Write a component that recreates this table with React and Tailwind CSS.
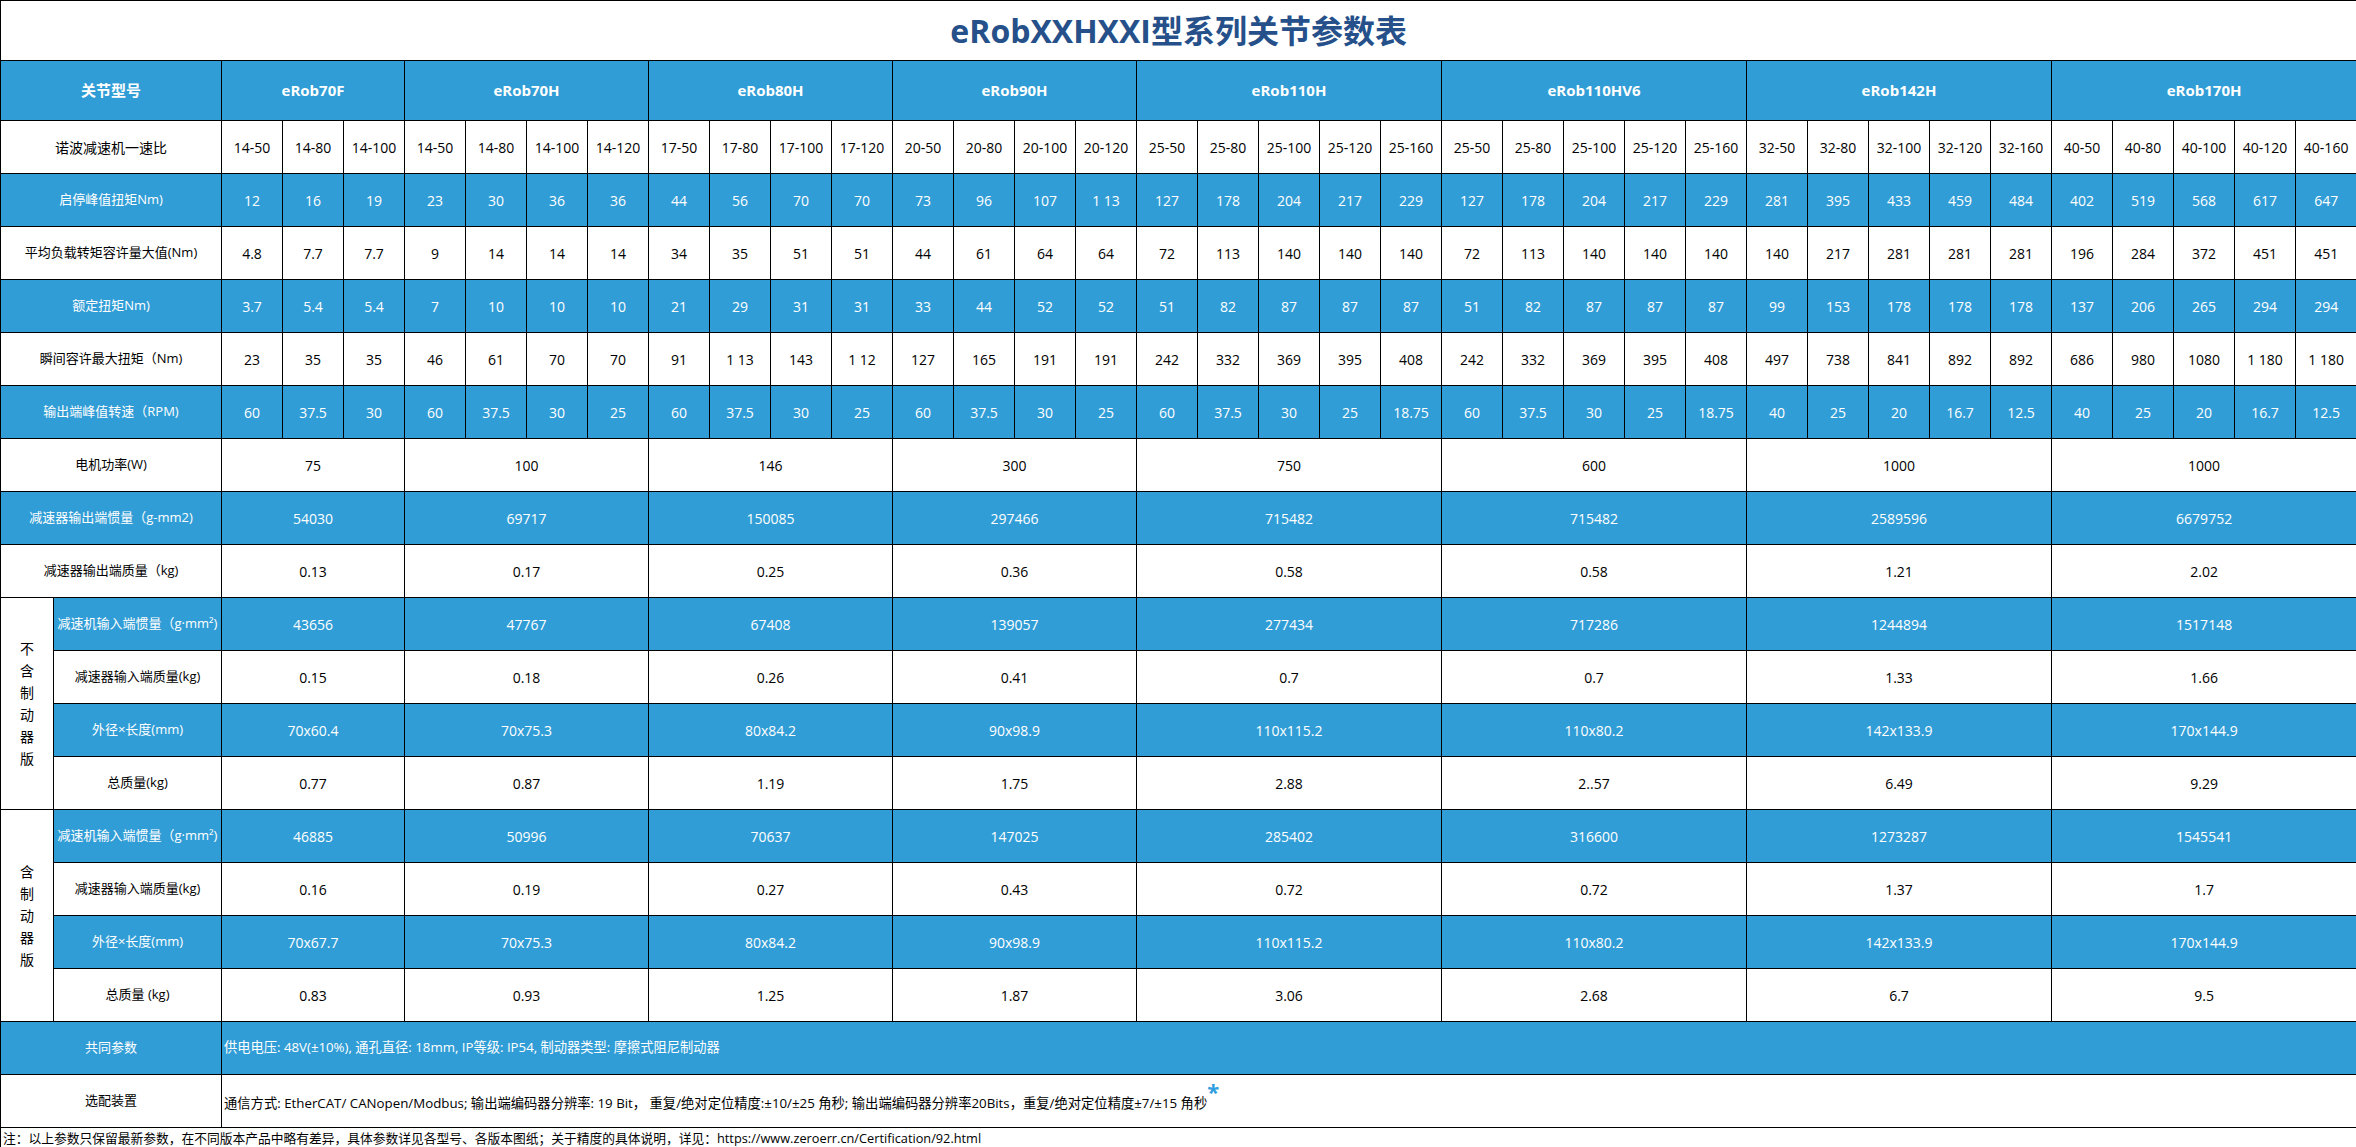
import React from 'react';

const groups = [
  { name: 'eRob70F', n: 3 },
  { name: 'eRob70H', n: 4 },
  { name: 'eRob80H', n: 4 },
  { name: 'eRob90H', n: 4 },
  { name: 'eRob110H', n: 5 },
  { name: 'eRob110HV6', n: 5 },
  { name: 'eRob142H', n: 5 },
  { name: 'eRob170H', n: 5 },
];

// rows with one value per reducer ratio
const ratioRows = [
  {
    label: '诺波减速机一速比',
    size: 'text-[14px]',
    blue: false,
    values: [
      '14-50', '14-80', '14-100',
      '14-50', '14-80', '14-100', '14-120',
      '17-50', '17-80', '17-100', '17-120',
      '20-50', '20-80', '20-100', '20-120',
      '25-50', '25-80', '25-100', '25-120', '25-160',
      '25-50', '25-80', '25-100', '25-120', '25-160',
      '32-50', '32-80', '32-100', '32-120', '32-160',
      '40-50', '40-80', '40-100', '40-120', '40-160',
    ],
  },
  {
    label: '启停峰值扭矩Nm)',
    size: 'text-[13px]',
    blue: true,
    values: [
      '12', '16', '19',
      '23', '30', '36', '36',
      '44', '56', '70', '70',
      '73', '96', '107', '1 13',
      '127', '178', '204', '217', '229',
      '127', '178', '204', '217', '229',
      '281', '395', '433', '459', '484',
      '402', '519', '568', '617', '647',
    ],
  },
  {
    label: '平均负载转矩容许量大值(Nm)',
    size: 'text-[13px]',
    blue: false,
    values: [
      '4.8', '7.7', '7.7',
      '9', '14', '14', '14',
      '34', '35', '51', '51',
      '44', '61', '64', '64',
      '72', '113', '140', '140', '140',
      '72', '113', '140', '140', '140',
      '140', '217', '281', '281', '281',
      '196', '284', '372', '451', '451',
    ],
  },
  {
    label: '额定扭矩Nm)',
    size: 'text-[13px]',
    blue: true,
    values: [
      '3.7', '5.4', '5.4',
      '7', '10', '10', '10',
      '21', '29', '31', '31',
      '33', '44', '52', '52',
      '51', '82', '87', '87', '87',
      '51', '82', '87', '87', '87',
      '99', '153', '178', '178', '178',
      '137', '206', '265', '294', '294',
    ],
  },
  {
    label: '瞬间容许最大扭矩（Nm)',
    size: 'text-[13px]',
    blue: false,
    values: [
      '23', '35', '35',
      '46', '61', '70', '70',
      '91', '1 13', '143', '1 12',
      '127', '165', '191', '191',
      '242', '332', '369', '395', '408',
      '242', '332', '369', '395', '408',
      '497', '738', '841', '892', '892',
      '686', '980', '1080', '1 180', '1 180',
    ],
  },
  {
    label: '输出端峰值转速（RPM)',
    size: 'text-[13px]',
    blue: true,
    values: [
      '60', '37.5', '30',
      '60', '37.5', '30', '25',
      '60', '37.5', '30', '25',
      '60', '37.5', '30', '25',
      '60', '37.5', '30', '25', '18.75',
      '60', '37.5', '30', '25', '18.75',
      '40', '25', '20', '16.7', '12.5',
      '40', '25', '20', '16.7', '12.5',
    ],
  },
];

// rows with one value per model
const modelRows = [
  { label: '电机功率(W)', blue: false, values: ['75', '100', '146', '300', '750', '600', '1000', '1000'] },
  { label: '减速器输出端惯量（g-mm2)', blue: true, values: ['54030', '69717', '150085', '297466', '715482', '715482', '2589596', '6679752'] },
  { label: '减速器输出端质量（kg)', blue: false, values: ['0.13', '0.17', '0.25', '0.36', '0.58', '0.58', '1.21', '2.02'] },
];

const brakeGroups = [
  {
    title: '不含制动器版',
    rows: [
      { label: '减速机输入端惯量（g·mm²)', blue: true, values: ['43656', '47767', '67408', '139057', '277434', '717286', '1244894', '1517148'] },
      { label: '减速器输入端质量(kg)', blue: false, values: ['0.15', '0.18', '0.26', '0.41', '0.7', '0.7', '1.33', '1.66'] },
      { label: '外径×长度(mm)', blue: true, values: ['70x60.4', '70x75.3', '80x84.2', '90x98.9', '110x115.2', '110x80.2', '142x133.9', '170x144.9'] },
      { label: '总质量(kg)', blue: false, values: ['0.77', '0.87', '1.19', '1.75', '2.88', '2..57', '6.49', '9.29'] },
    ],
  },
  {
    title: '含制动器版',
    rows: [
      { label: '减速机输入端惯量（g·mm²)', blue: true, values: ['46885', '50996', '70637', '147025', '285402', '316600', '1273287', '1545541'] },
      { label: '减速器输入端质量(kg)', blue: false, values: ['0.16', '0.19', '0.27', '0.43', '0.72', '0.72', '1.37', '1.7'] },
      { label: '外径×长度(mm)', blue: true, values: ['70x67.7', '70x75.3', '80x84.2', '90x98.9', '110x115.2', '110x80.2', '142x133.9', '170x144.9'] },
      { label: '总质量 (kg)', blue: false, values: ['0.83', '0.93', '1.25', '1.87', '3.06', '2.68', '6.7', '9.5'] },
    ],
  },
];

const cell = 'border border-black p-0 text-center whitespace-nowrap';
const tone = (blue) => (blue ? 'bg-[#319dd6] text-white' : 'bg-white text-black');

const App = () => {
  return (
    <div className="w-[2356px] h-[1147px] overflow-hidden bg-white font-['Open_Sans','Noto_Sans_CJK_SC',sans-serif]">
      <table className="w-[2356px] table-fixed border-collapse">
        <colgroup>
          <col className="w-[53px]" />
          <col className="w-[168px]" />
          {Array.from({ length: 35 }).map((_, i) => (
            <col key={i} className="w-[61px]" />
          ))}
        </colgroup>
        <tbody>
          <tr className="h-[60px]">
            <td colSpan={37} className={`${cell} text-[32px] font-bold text-[#25508a]`}>
              eRobXXHXXI型系列关节参数表
            </td>
          </tr>

          <tr className="h-[60px] bg-[#319dd6] text-white">
            <td colSpan={2} className={`${cell} text-[15px] font-bold`}>关节型号</td>
            {groups.map((g) => (
              <td key={g.name} colSpan={g.n} className={`${cell} text-[15px] font-bold`}>
                {g.name}
              </td>
            ))}
          </tr>

          {ratioRows.map((row) => (
            <tr key={row.label} className={`h-[53px] ${tone(row.blue)}`}>
              <td colSpan={2} className={`${cell} ${row.size}`}>{row.label}</td>
              {row.values.map((v, i) => (
                <td key={i} className={`${cell} text-[14px]`}>{v}</td>
              ))}
            </tr>
          ))}

          {modelRows.map((row) => (
            <tr key={row.label} className={`h-[53px] ${tone(row.blue)}`}>
              <td colSpan={2} className={`${cell} text-[13px]`}>{row.label}</td>
              {row.values.map((v, i) => (
                <td key={i} colSpan={groups[i].n} className={`${cell} text-[14px]`}>{v}</td>
              ))}
            </tr>
          ))}

          {brakeGroups.map((grp) =>
            grp.rows.map((row, r) => (
              <tr key={grp.title + row.label} className={`h-[53px] ${tone(row.blue)}`}>
                {r === 0 && (
                  <td rowSpan={grp.rows.length} className={`${cell} bg-white text-black text-[14px]`}>
                    <div className="flex flex-col items-center leading-[22px]">
                      {grp.title.split('').map((ch, k) => (
                        <span key={k}>{ch}</span>
                      ))}
                    </div>
                  </td>
                )}
                <td className={`${cell} text-[13px]`}>{row.label}</td>
                {row.values.map((v, i) => (
                  <td key={i} colSpan={groups[i].n} className={`${cell} text-[14px]`}>{v}</td>
                ))}
              </tr>
            ))
          )}

          <tr className="h-[53px] bg-[#319dd6] text-white">
            <td colSpan={2} className={`${cell} text-[13px]`}>共同参数</td>
            <td colSpan={35} className="border border-black p-0 pl-[2px] text-left text-[13.25px] whitespace-nowrap">
              供电电压: 48V(±10%), 通孔直径: 18mm, IP等级: IP54, 制动器类型: 摩擦式阻尼制动器
            </td>
          </tr>

          <tr className="h-[53px] bg-white text-black">
            <td colSpan={2} className={`${cell} text-[13px]`}>选配装置</td>
            <td colSpan={35} className="border border-black p-0 pl-[2px] text-left text-[13.3px] whitespace-nowrap">
              通信方式: EtherCAT/ CANopen/Modbus; 输出端编码器分辨率: 19 Bit， 重复/绝对定位精度:±10/±25 角秒; 输出端编码器分辨率20Bits，重复/绝对定位精度±7/±15 角秒
              <span className="relative -top-[8px] text-[22px] font-bold leading-none text-[#2f9ee0]">*</span>
            </td>
          </tr>

          <tr className="h-[20px] bg-white text-black">
            <td colSpan={37} className="border border-black p-0 pl-[2px] text-left text-[12.75px] leading-[18px] whitespace-nowrap">
              注：以上参数只保留最新参数，在不同版本产品中略有差异，具体参数详见各型号、各版本图纸；关于精度的具体说明，详见：https://www.zeroerr.cn/Certification/92.html
            </td>
          </tr>
        </tbody>
      </table>
    </div>
  );
};

export default App;
